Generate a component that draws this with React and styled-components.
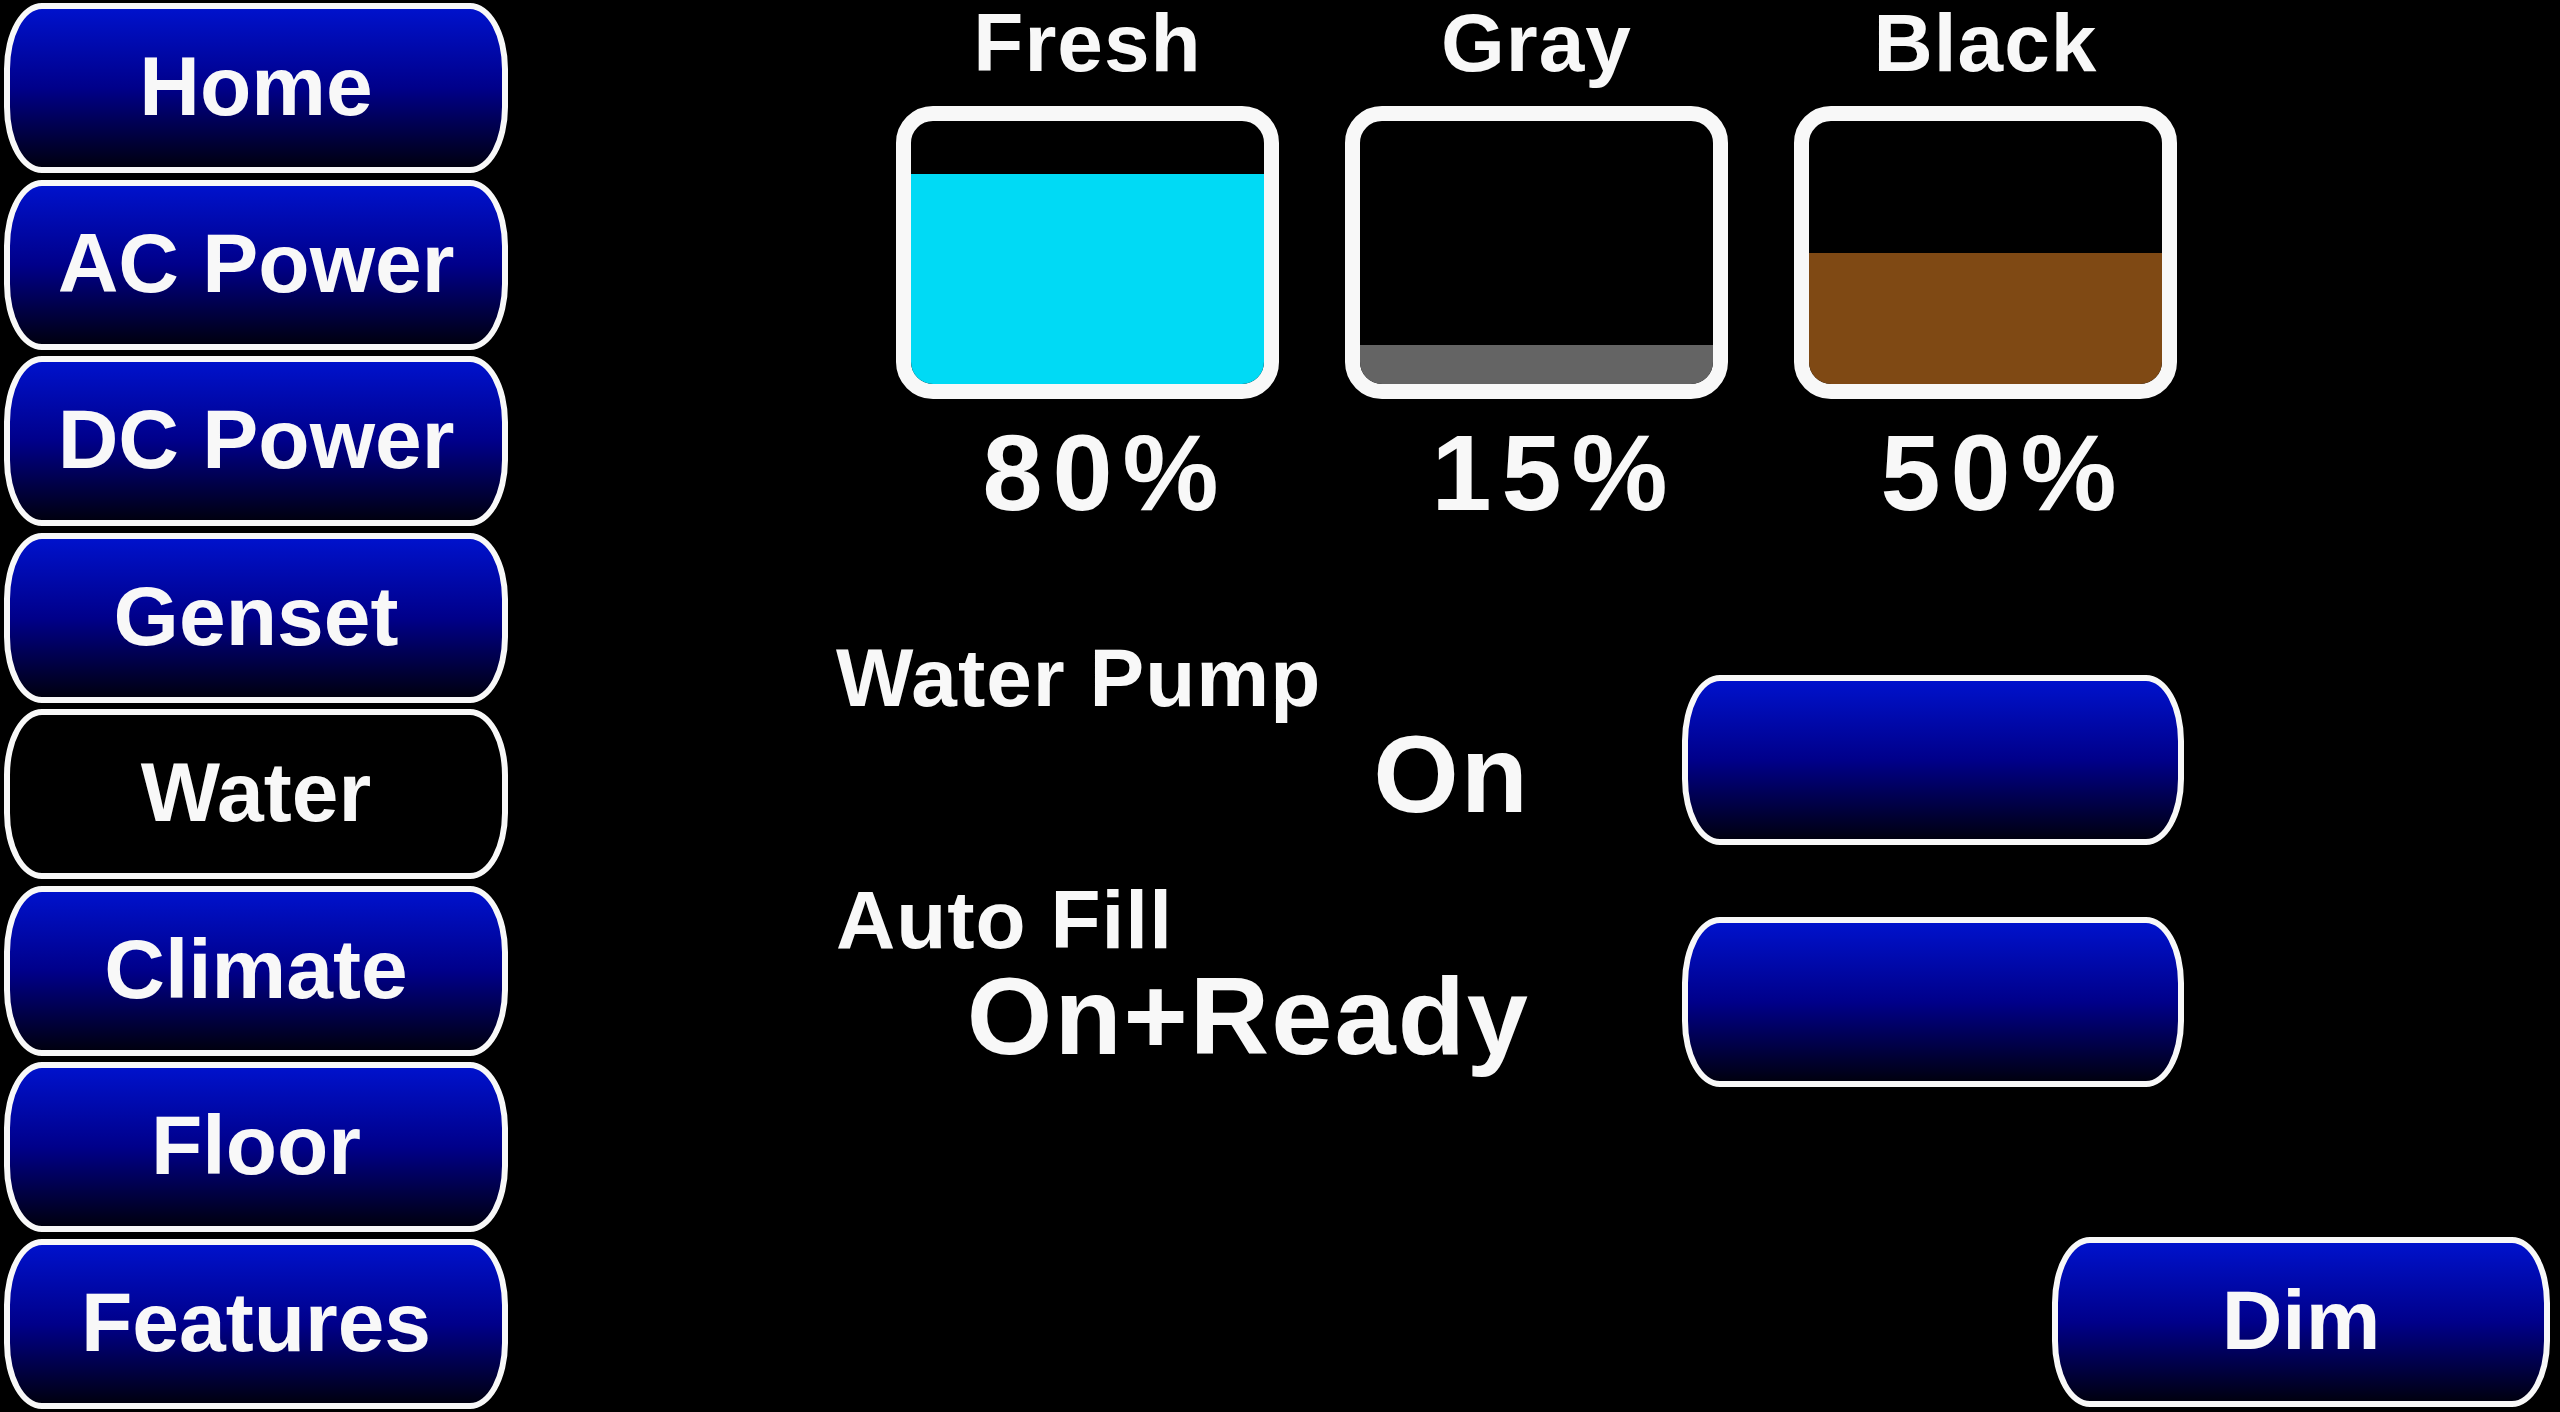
import React from "react";
import styled, { createGlobalStyle, css } from "styled-components";

const GlobalStyle = createGlobalStyle`
  html, body {
    margin: 0;
    padding: 0;
    background: #000;
  }
  body {
    font-family: "Liberation Sans", Arial, sans-serif;
    color: #f8f8f8;
  }
`;

const NAV_ITEMS = ["Home", "AC Power", "DC Power", "Genset", "Water", "Climate", "Floor", "Features"];

const TANKS = [
  { name: "Fresh", level: 80, color: "#00daf5" },
  { name: "Gray", level: 15, color: "#646464" },
  { name: "Black", level: 50, color: "#7f4914" },
];

const CONTROLS = [
  { label: "Water Pump", value: "On" },
  { label: "Auto Fill", value: "On+Ready" },
];

// shared look of every blue touch button
const pill = css`
  box-sizing: border-box;
  height: 170px;
  border: 6px solid #f8f8f8;
  border-radius: 38px / 66px;
  background: linear-gradient(180deg, #0012cc 0%, #00008a 50%, #000010 100%);
  color: #f8f8f8;
  font: bold 84px/1 "Liberation Sans", Arial, sans-serif;
  display: flex;
  align-items: center;
  justify-content: center;
  padding: 0 0 4px;
  cursor: pointer;
`;

export default function App() {
  return (
    <>
      <GlobalStyle />
      <Screen>
        <Sidebar>
          {NAV_ITEMS.map((item) => (
            <NavButton key={item} $active={item === "Water"}>
              {item}
            </NavButton>
          ))}
        </Sidebar>

        <Main>
          <TankRow>
            {TANKS.map((tank) => (
              <TankColumn key={tank.name}>
                <TankLabel>{tank.name}</TankLabel>
                <TankBody>
                  <TankFill $color={tank.color} style={{ height: `${tank.level}%` }} />
                </TankBody>
                <TankPercent>{tank.level}%</TankPercent>
              </TankColumn>
            ))}
          </TankRow>

          <ControlList>
            {CONTROLS.map((control) => (
              <ControlRow key={control.label}>
                <ControlInfo>
                  <ControlLabel>{control.label}</ControlLabel>
                  <ControlValue>{control.value}</ControlValue>
                </ControlInfo>
                <ToggleButton aria-label={control.label} />
              </ControlRow>
            ))}
          </ControlList>

          <Footer>
            <DimButton>Dim</DimButton>
          </Footer>
        </Main>
      </Screen>
    </>
  );
}

const Screen = styled.div`
  display: grid;
  grid-template-columns: 512px 1fr;
  height: 100vh;
  min-height: 1412px;
  background: #000;
`;

const Sidebar = styled.nav`
  display: flex;
  flex-direction: column;
  gap: 6.5px;
  padding: 3px 0 0 4px;
`;

const NavButton = styled.button`
  ${pill}
  width: 504px;
  ${({ $active }) =>
    $active &&
    css`
      background: #000;
    `}
`;

const Main = styled.main`
  display: flex;
  flex-direction: column;
  padding: 2px 10px 5px 324px;
`;

const TankRow = styled.div`
  display: flex;
  gap: 66px;
  margin-left: 60px;
`;

const TankColumn = styled.div`
  display: flex;
  flex-direction: column;
  align-items: center;
  width: 383px;
`;

const TankLabel = styled.div`
  font: bold 82px/1 "Liberation Sans", Arial, sans-serif;
  letter-spacing: 1px;
`;

const TankBody = styled.div`
  box-sizing: border-box;
  margin-top: 22px;
  width: 383px;
  height: 293px;
  border: 15px solid #f8f8f8;
  border-radius: 37px;
  overflow: hidden;
  display: flex;
  flex-direction: column;
  justify-content: flex-end;
  background: #000;
`;

const TankFill = styled.div`
  width: 100%;
  background: ${({ $color }) => $color};
`;

const TankPercent = styled.div`
  margin-top: 20px;
  padding-left: 36px;
  font: bold 108px/1 "Liberation Sans", Arial, sans-serif;
  letter-spacing: 10px;
`;

const ControlList = styled.div`
  display: flex;
  flex-direction: column;
  gap: 34px;
  margin-top: 110px;
`;

const ControlRow = styled.div`
  display: grid;
  grid-template-columns: 694px 502px;
  column-gap: 152px;
  align-items: start;
`;

const ControlInfo = styled.div`
  display: flex;
  flex-direction: column;
`;

const ControlLabel = styled.div`
  font: bold 82px/1 "Liberation Sans", Arial, sans-serif;
  letter-spacing: 1px;
`;

const ControlValue = styled.div`
  font: bold 110px/1 "Liberation Sans", Arial, sans-serif;
  letter-spacing: 2px;
  text-align: right;
`;

const ToggleButton = styled.button`
  ${pill}
  width: 502px;
  margin-top: 38px;
`;

const Footer = styled.div`
  margin-top: auto;
  display: flex;
  justify-content: flex-end;
`;

const DimButton = styled.button`
  ${pill}
  width: 498px;
`;
